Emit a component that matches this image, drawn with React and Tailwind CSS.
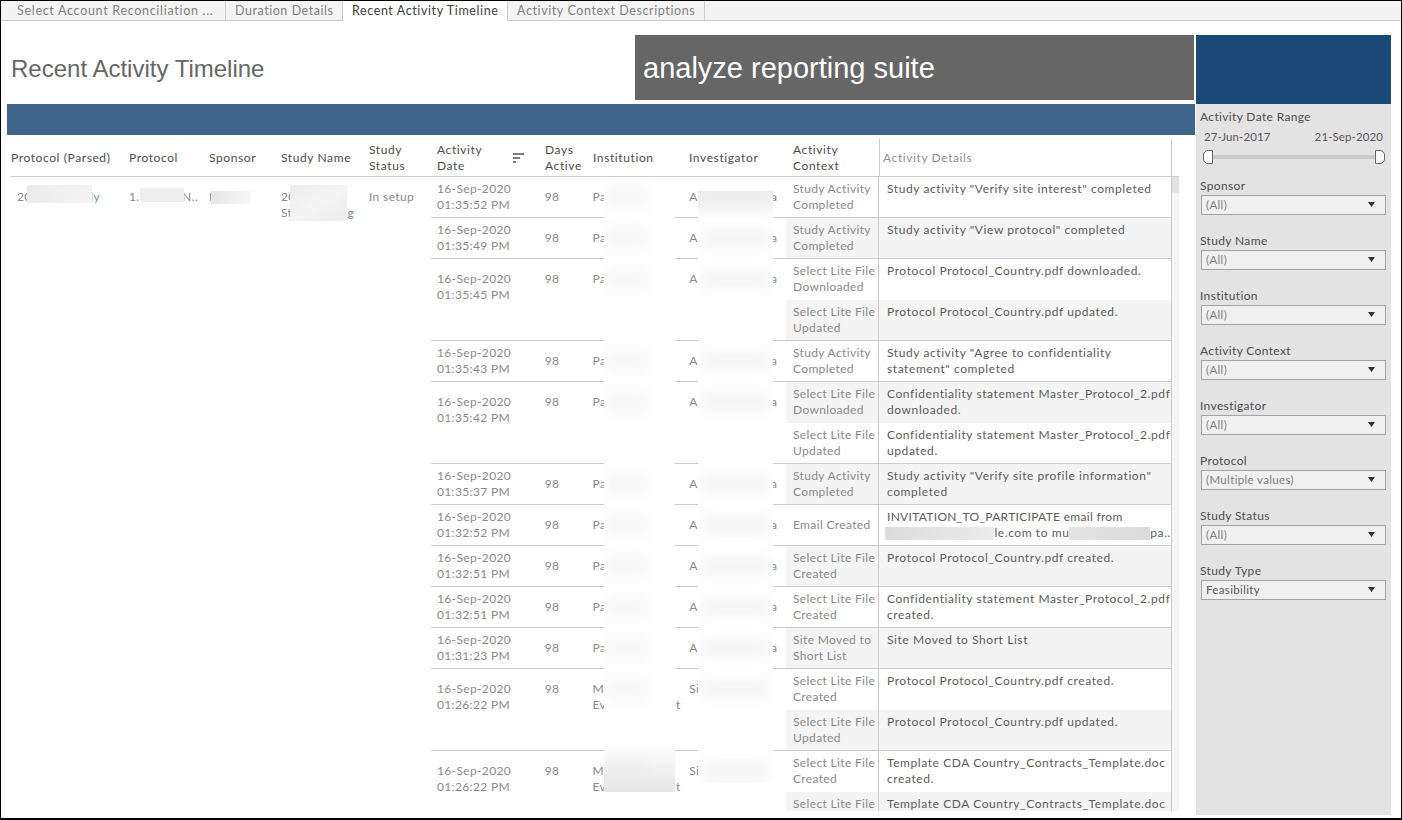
import React from "react";

const tabs = [
  { label: "Select Account Reconciliation ...", w: "w-[219px] pl-[10px] tracking-[0.7px]" },
  { label: "Duration Details", w: "w-[117px] pl-[9px] tracking-[0.55px]" },
  { label: "Recent Activity Timeline", w: "w-[165px] pl-[9px] tracking-[0.6px]", active: true },
  { label: "Activity Context Descriptions", w: "w-[197px] pl-[9px] tracking-[0.6px]" },
];

const filters = [
  { label: "Sponsor", value: "(All)" },
  { label: "Study Name", value: "(All)" },
  { label: "Institution", value: "(All)" },
  { label: "Activity Context", value: "(All)" },
  { label: "Investigator", value: "(All)" },
  { label: "Protocol", value: "(Multiple values)" },
  { label: "Study Status", value: "(All)" },
  { label: "Study Type", value: "Feasibility", dark: true },
];

const master = "Confidentiality statement Master_Protocol_2.pdf";

const groups = [
  { time: "01:35:52 PM", items: [["Study Activity\nCompleted", 'Study activity "Verify site interest" completed']] },
  { time: "01:35:49 PM", items: [["Study Activity\nCompleted", 'Study activity "View protocol" completed']] },
  {
    time: "01:35:45 PM",
    items: [
      ["Select Lite File\nDownloaded", "Protocol Protocol_Country.pdf downloaded."],
      ["Select Lite File\nUpdated", "Protocol Protocol_Country.pdf updated."],
    ],
  },
  { time: "01:35:43 PM", items: [["Study Activity\nCompleted", 'Study activity "Agree to confidentiality\nstatement" completed']] },
  {
    time: "01:35:42 PM",
    items: [
      ["Select Lite File\nDownloaded", master + "\ndownloaded."],
      ["Select Lite File\nUpdated", master + "\nupdated."],
    ],
  },
  { time: "01:35:37 PM", items: [["Study Activity\nCompleted", 'Study activity "Verify site profile information"\ncompleted']] },
  { time: "01:32:52 PM", items: [["Email Created", "email"]] },
  { time: "01:32:51 PM", items: [["Select Lite File\nCreated", "Protocol Protocol_Country.pdf created."]] },
  { time: "01:32:51 PM", items: [["Select Lite File\nCreated", master + "\ncreated."]] },
  { time: "01:31:23 PM", items: [["Site Moved to\nShort List", "Site Moved to Short List"]] },
  {
    time: "01:26:22 PM",
    alt: true,
    items: [
      ["Select Lite File\nCreated", "Protocol Protocol_Country.pdf created."],
      ["Select Lite File\nUpdated", "Protocol Protocol_Country.pdf updated."],
    ],
  },
  {
    time: "01:26:22 PM",
    alt: true,
    items: [
      ["Select Lite File\nCreated", "Template CDA Country_Contracts_Template.doc\ncreated."],
      ["Select Lite File\nUpdated", "Template CDA Country_Contracts_Template.doc\nupdated."],
    ],
  },
];

// y of each group's top, measured from the first row
const groupTops = [];
groups.reduce((y, g) => {
  groupTops.push(y);
  return y + g.items.length * 41;
}, 0);

function Caret() {
  return (
    <svg width="7" height="5" viewBox="0 0 7 5" className="mr-[10px] mb-[2px]">
      <polygon points="0,0 7,0 3.5,5" fill="#333" />
    </svg>
  );
}

function Filter({ label, value, dark }) {
  return (
    <div className="h-[55px] pt-[3px]">
      <div className="h-[16px] pl-[4px] leading-[16px] text-[#4d4d4d]">{label}</div>
      <div className="mt-[1px] ml-[5px] mr-[5px] flex h-[20px] items-center justify-between border border-[#a3a3a3] bg-[#f0f0f0] pl-[4px]">
        <span className={dark ? "text-[11.5px] text-[#595959]" : "text-[11.5px] text-[#7f7f7f]"}>{value}</span>
        <Caret />
      </div>
    </div>
  );
}

function EmailText() {
  return (
    <>
      <div className="tracking-[0.3px]">INVITATION_TO_PARTICIPATE email from</div>
      <div className="-ml-[2px] flex items-center">
        <span className="inline-block h-[13px] w-[115px] bg-gradient-to-r from-[#dcdcdc] to-[#ececec]" />
        <span>le.com to mu</span>
        <span className="inline-block h-[13px] w-[85px] bg-gradient-to-r from-[#e4e4e4] to-[#dadada]" />
        <span>pa..</span>
      </div>
    </>
  );
}

function Group({ group, startIndex }) {
  const two = group.items.length > 1;
  return (
    <div className="flex border-b border-[#cccccc]">
      <div className={two ? "w-[108px] pl-[6px] pt-[12px] text-[#8a8a8a]" : "w-[108px] pl-[6px] pt-[4px] text-[#8a8a8a]"}>
        <div>16-Sep-2020</div>
        <div>{group.time}</div>
      </div>
      <div className="w-[48px] pl-[6px] pt-[12px] text-[#8a8a8a]">98</div>
      <div className="w-[96px] pl-[6px] pt-[12px] text-[#8a8a8a]">
        {group.alt ? (
          <>
            <div>M</div>
            <div className="flex w-[88px] justify-between">
              <span>Ev</span>
              <span>t</span>
            </div>
          </>
        ) : (
          "Pa"
        )}
      </div>
      <div className="w-[104px] pl-[7px] pt-[12px] text-[#8a8a8a]">
        {group.alt ? (
          "Si"
        ) : (
          <div className="flex w-[88px] justify-between">
            <span>A</span>
            <span>a</span>
          </div>
        )}
      </div>
      <div className="w-[385px]">
        {group.items.map(([context, detail], i) => {
          const shaded = (startIndex + i) % 2 === 1;
          const oneLine = !context.includes("\n");
          return (
            <div key={i} className={shaded ? "flex h-[41px] bg-[#f4f4f4] last:h-[40px]" : "flex h-[41px] last:h-[40px]"}>
              <div className={oneLine ? "w-[92px] whitespace-pre pl-[7px] pt-[12px] text-[#8a8a8a]" : "w-[92px] whitespace-pre pl-[7px] pt-[4px] text-[#8a8a8a]"}>
                {context}
              </div>
              <div className="w-[293px] whitespace-pre border-l border-[#cccccc] pl-[8px] pt-[4px] tracking-[0.58px] text-[#5c5c5c]">
                {detail === "email" ? <EmailText /> : detail}
              </div>
            </div>
          );
        })}
      </div>
    </div>
  );
}

export default function App() {
  let index = 0;
  return (
    <div className="flex h-[820px] w-[1402px] flex-col overflow-hidden border border-b-2 border-black bg-white font-['Lato',sans-serif] text-[12px] leading-[16px] tracking-[0.35px]">
      <div className="flex h-[20px] shrink-0 border-b border-[#cccccc] bg-[#f4f4f4] pl-[6px]">
        {tabs.map((t) => (
          <div
            key={t.label}
            className={
              t.active
                ? `${t.w} h-[20px] border-r border-[#cccccc] bg-white text-[12.5px] leading-[19px] text-[#404040]`
                : `${t.w} h-[19px] border-r border-[#cccccc] text-[12.5px] leading-[19px] text-[#808080]`
            }
          >
            {t.label}
          </div>
        ))}
      </div>

      <div className="flex flex-1">
        <div className="w-[1195px] pl-[6px] pt-[14px]">
          <div className="flex h-[65px] items-center font-['Liberation_Sans',sans-serif] tracking-normal">
            <div className="w-[628px] pl-[4px] pt-[2px] text-[24px] text-[#666]">Recent Activity Timeline</div>
            <div className="flex h-[65px] w-[559px] items-center bg-[#666666] pl-[8px] pt-[1px] text-[29px] text-white">
              analyze reporting suite
            </div>
          </div>
          <div className="mt-[4px] h-[31px] w-[1188px] bg-[#3f658c]" />

          <div className="relative ml-[4px] mt-[4px] h-[672px] w-[1168px] overflow-hidden">
            <div className="grid h-[38px] grid-cols-[118px_80px_72px_88px_62px_108px_48px_96px_104px_92px_293px] border-b border-[#cccccc] tracking-[0.6px] text-[#4d4d4d]">
              <div className="self-center">Protocol (Parsed)</div>
              <div className="self-center">Protocol</div>
              <div className="self-center">Sponsor</div>
              <div className="self-center">Study Name</div>
              <div className="self-center">Study<br />Status</div>
              <div className="flex items-center justify-between pl-[6px] pr-[15px]">
                <span>Activity<br />Date</span>
                <svg width="11" height="10" viewBox="0 0 11 10">
                  <path d="M0 1h11M0 5h7M0 9h3" stroke="#555" strokeWidth="1.6" />
                </svg>
              </div>
              <div className="self-center pl-[6px]">Days<br />Active</div>
              <div className="self-center pl-[6px]">Institution</div>
              <div className="self-center pl-[6px]">Investigator</div>
              <div className="self-center pl-[6px]">Activity<br />Context</div>
              <div className="flex items-center border-x border-[#cccccc] pl-[3px] text-[#8f8f8f]">Activity Details</div>
            </div>

            <div className="flex">
              <div className="flex w-[420px] text-[#8a8a8a]">
                <div className="w-[118px] pl-[6px] pt-[12px]">
                  <div className="flex w-[83px] justify-between"><span>20</span><span>ly</span></div>
                </div>
                <div className="w-[80px] pt-[12px]">
                  <div className="flex w-[69px] justify-between"><span>1.</span><span>N..</span></div>
                </div>
                <div className="w-[72px] pt-[12px]">I</div>
                <div className="w-[88px] pt-[12px]">
                  <div>20</div>
                  <div className="flex w-[73px] justify-between"><span>St</span><span>g</span></div>
                </div>
                <div className="w-[62px] pt-[12px]">In setup</div>
              </div>
              <div className="w-[741px] border-r border-[#cccccc]">
                {groups.map((g, i) => {
                  const start = index;
                  index += g.items.length;
                  return <Group key={i} group={g} startIndex={start} />;
                })}
              </div>
              <div className="w-[7px] bg-[#f5f5f5]">
                <div className="h-[16px] bg-[#e2e2e2]" />
              </div>
            </div>

            {/* redacted areas */}
            <div className="absolute left-[16px] top-[46px] h-[18px] w-[65px] bg-gradient-to-r from-[#ececec] to-[#f3f3f3]" />
            <div className="absolute left-[129px] top-[49px] h-[14px] w-[44px] bg-[#eeeeee]" />
            <div className="absolute left-[200px] top-[52px] h-[13px] w-[39px] bg-gradient-to-r from-[#e6e6e6] to-[#f6f6f6]" />
            <div className="absolute left-[279px] top-[46px] h-[36px] w-[57px] bg-gradient-to-br from-[#ededed] via-[#f4f4f4] to-[#ececec]" />
            <div className="absolute left-[593px] top-[42px] h-[611px] w-[71px] overflow-hidden bg-white">
              {groupTops.map((y) => (
                <div key={y} className="absolute left-0 h-[24px] w-[44px] bg-[#f8f8f8] blur-[6px]" style={{ top: y + 4 }} />
              ))}
              <div className="absolute bottom-0 h-[50px] w-full bg-gradient-to-t from-[#e6e6e6] to-transparent" />
            </div>
            <div className="absolute left-[687px] top-[52px] h-[592px] w-[75px] overflow-hidden bg-white">
              {groupTops.map((y) => (
                <div key={y} className="absolute left-[2px] h-[20px] w-[70px] bg-[#f6f6f6] blur-[6px]" style={{ top: y - 4 }} />
              ))}
              <div className="absolute top-0 h-[30px] w-full bg-gradient-to-b from-[#ececec] to-transparent" />
            </div>
          </div>
        </div>

        <div className="mt-[14px] flex h-[780px] w-[195px] flex-col bg-[#e3e3e3] text-[#4d4d4d]">
          <div className="h-[69px] bg-[#1c4a78]" />
          <div className="mt-[5px] h-[16px] pl-[4px]">Activity Date Range</div>
          <div className="mt-[4px] flex justify-between px-[8px] text-[11.5px] tracking-[0.1px] text-[#595959]">
            <span>27-Jun-2017</span>
            <span>21-Sep-2020</span>
          </div>
          <div className="ml-[7px] mr-[6px] mt-[5px] flex h-[14px] items-center">
            <div className="h-[14px] w-[10px] shrink-0 rounded-l-[5px] border border-[#666] bg-white" />
            <div className="h-[4px] flex-1 bg-[#cacaca]" />
            <div className="h-[14px] w-[10px] shrink-0 rounded-r-[5px] border border-[#666] bg-white" />
          </div>
          <div className="mt-[11px]">
            {filters.map((f) => (
              <Filter key={f.label} {...f} />
            ))}
          </div>
        </div>
      </div>
    </div>
  );
}
